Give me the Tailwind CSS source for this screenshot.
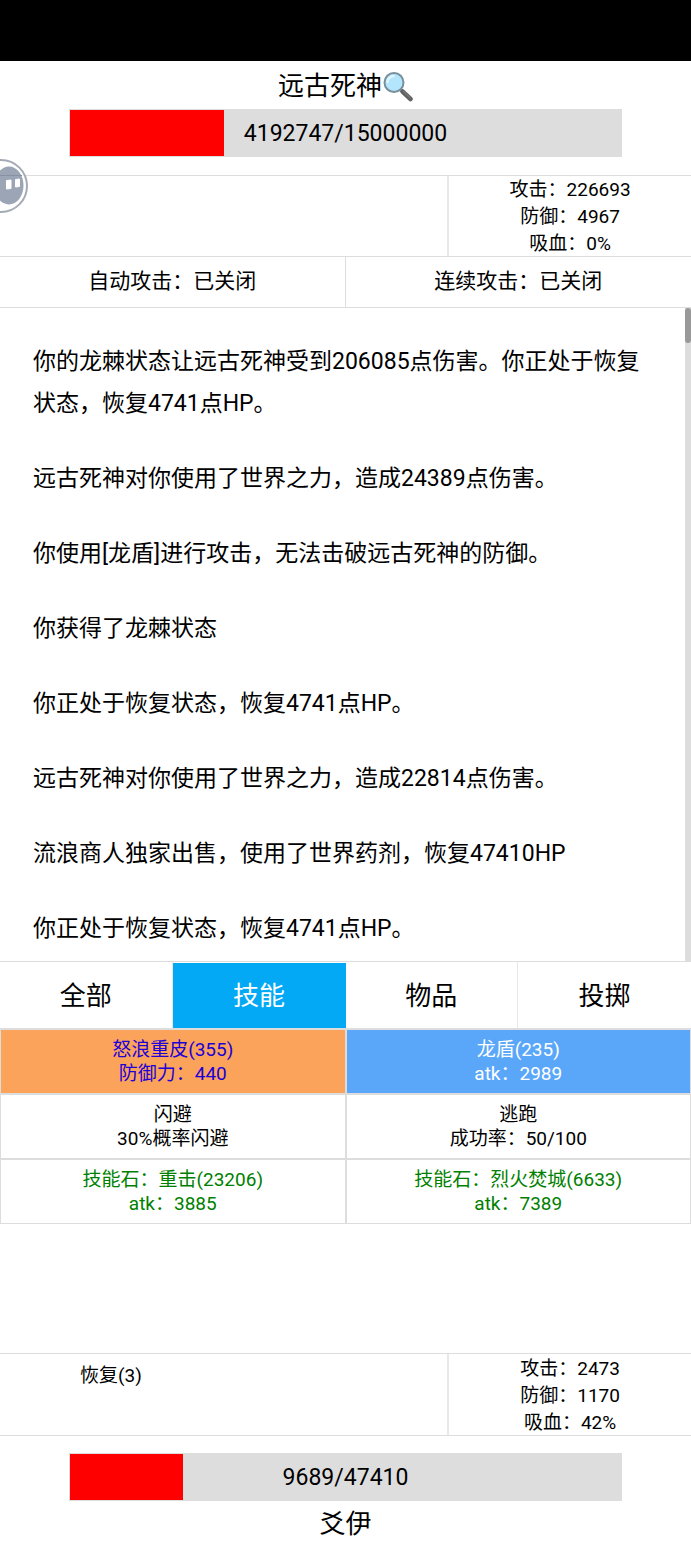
<!DOCTYPE html>
<html lang="zh-CN">
<head>
    <meta charset="UTF-8" />
    <meta name="viewport" content="width=device-width, initial-scale=1.0" />
    <title>远古死神</title>
    <script src="https://cdn.jsdelivr.net/npm/@tailwindcss/browser@4"></script>
</head>

<body class="h-screen flex flex-col relative overflow-x-hidden bg-white text-black font-[Roboto,'Noto_Sans_CJK_SC',sans-serif]">

    <div class="h-[61px] shrink-0 bg-black"></div>

    <!-- 敌方 -->
    <header class="shrink-0 pb-[18px]">
        <h1 class="h-12 pt-0.5 flex items-center justify-center text-[26px]">
            远古死神
            <button type="button" aria-label="查看" class="size-[31px]">
                <svg viewBox="0 0 31 31" class="size-full" aria-hidden="true">
                    <path d="M18 18l3 3" stroke="#90a4ae" stroke-width="3" />
                    <path d="M20.5 20.5l8 7.5" stroke="#616161" stroke-width="4.5" stroke-linecap="round" />
                    <path d="M21.5 20.5l7 6.5" stroke="#858585" stroke-width="1" stroke-linecap="round" />
                    <circle cx="12" cy="11.5" r="9.5" fill="#b3e5fc" stroke="#78909c" stroke-width="2" />
                    <path d="M5.5 11a6.5 6.5 0 0 1 6-6" fill="none" stroke="#e1f5fe" stroke-width="2.5" stroke-linecap="round" />
                </svg>
            </button>
        </h1>
        <div role="progressbar" aria-label="敌方生命" aria-valuenow="4192747" aria-valuemax="15000000" class="relative w-4/5 h-12 mx-auto border border-[#ddd] bg-[#ddd]">
            <div class="h-full bg-[#f00]" style="width: 27.95%"></div>
            <span class="absolute inset-0 pt-[3px] flex items-center justify-center text-[23px]">4192747/15000000</span>
        </div>
    </header>

    <section class="shrink-0 flex h-[82px] border-y border-[#ddd]">
        <div class="w-[65%] border-r-2 border-[#e8e8e8]"></div>
        <div class="flex-1 text-center text-[19px] leading-[27px]">
            <p>攻击：226693</p>
            <p>防御：4967</p>
            <p>吸血：0%</p>
        </div>
    </section>

    <div class="shrink-0 grid grid-cols-2 h-[51px] border-b border-[#ddd] text-[21px]">
        <button type="button" class="border-r border-[#ddd]">自动攻击：已关闭</button>
        <button type="button">连续攻击：已关闭</button>
    </div>

    <!-- 战斗记录 -->
    <main class="relative flex-1 min-h-0 overflow-hidden">
        <div class="flex flex-col gap-[33px] px-[33px] pt-[33px] text-[23px] leading-[42px]">
            <p>你的龙棘状态让远古死神受到206085点伤害。你正处于恢复状态，恢复4741点HP。</p>
            <p>远古死神对你使用了世界之力，造成24389点伤害。</p>
            <p>你使用[龙盾]进行攻击，无法击破远古死神的防御。</p>
            <p>你获得了龙棘状态</p>
            <p>你正处于恢复状态，恢复4741点HP。</p>
            <p>远古死神对你使用了世界之力，造成22814点伤害。</p>
            <p>流浪商人独家出售，使用了世界药剂，恢复47410HP</p>
            <p>你正处于恢复状态，恢复4741点HP。</p>
        </div>
        <div class="absolute right-0 inset-y-0 w-1.5 bg-[#ddd]">
            <div class="h-[35px] rounded-sm bg-[#999]"></div>
        </div>
    </main>

    <nav class="shrink-0 grid grid-cols-4 h-[68px] border-y border-[#ddd] text-[26px]">
        <button type="button" class="pt-0.5 border-r border-[#e8e8e8]">全部</button>
        <button type="button" class="mt-px pt-0.5 bg-[#03a9f4] text-white">技能</button>
        <button type="button" class="pt-0.5 border-r border-[#e8e8e8]">物品</button>
        <button type="button" class="pt-0.5">投掷</button>
    </nav>

    <!-- 技能 -->
    <div class="shrink-0 grid grid-cols-2 auto-rows-[65px] h-[324px] text-[19px] leading-6">
        <button type="button" class="border border-[#ddd] bg-[#fba35a] text-[#2000d8]">怒浪重皮(355)<br>防御力：440</button>
        <button type="button" class="border border-[#ddd] bg-[#5aa7f9] text-white">龙盾(235)<br>atk：2989</button>
        <button type="button" class="border border-[#ddd]">闪避<br>30%概率闪避</button>
        <button type="button" class="border border-[#ddd]">逃跑<br>成功率：50/100</button>
        <button type="button" class="border border-[#ddd] text-[#008000]">技能石：重击(23206)<br>atk：3885</button>
        <button type="button" class="border border-[#ddd] text-[#008000]">技能石：烈火焚城(6633)<br>atk：7389</button>
    </div>

    <!-- 我方 -->
    <section class="shrink-0 flex h-[83px] border-y border-[#ddd] text-[19px]">
        <div class="w-[65%] border-r-2 border-[#e8e8e8] px-20 pt-2 leading-[27px]">恢复(3)</div>
        <div class="flex-1 pt-px text-center leading-[27px]">
            <p>攻击：2473</p>
            <p>防御：1170</p>
            <p>吸血：42%</p>
        </div>
    </section>

    <footer class="shrink-0 pt-[17px]">
        <div role="progressbar" aria-label="我方生命" aria-valuenow="9689" aria-valuemax="47410" class="relative w-4/5 h-12 mx-auto border border-[#ddd] bg-[#ddd]">
            <div class="h-full bg-[#f00]" style="width: 20.44%"></div>
            <span class="absolute inset-0 pt-[3px] flex items-center justify-center text-[23px]">9689/47410</span>
        </div>
        <p class="h-[47px] flex items-center justify-center text-[26px]">爻伊</p>
    </footer>

    <!-- 悬浮球 -->
    <button type="button" aria-label="悬浮球" class="absolute left-0 top-[158px] w-7 h-14">
        <svg viewBox="0 0 28 56" class="size-full" aria-hidden="true">
            <circle cx="1" cy="28" r="26" fill="#fff" fill-opacity="0.85" stroke="#a5abb5" stroke-width="2" />
            <ellipse cx="9" cy="27.5" rx="14.5" ry="19" fill="#9ba5b5" />
            <path d="M0 17.5h22" stroke="#8791a2" stroke-width="1" />
            <path d="M6.5 22.5l4.5-.5v8.500l-4.500.5zM15.500 21.500l4-.5v7.500l-4 .5z" fill="#fff" stroke="#fff" stroke-width="1" stroke-linejoin="round" />
        </svg>
    </button>

</body>
</html>
